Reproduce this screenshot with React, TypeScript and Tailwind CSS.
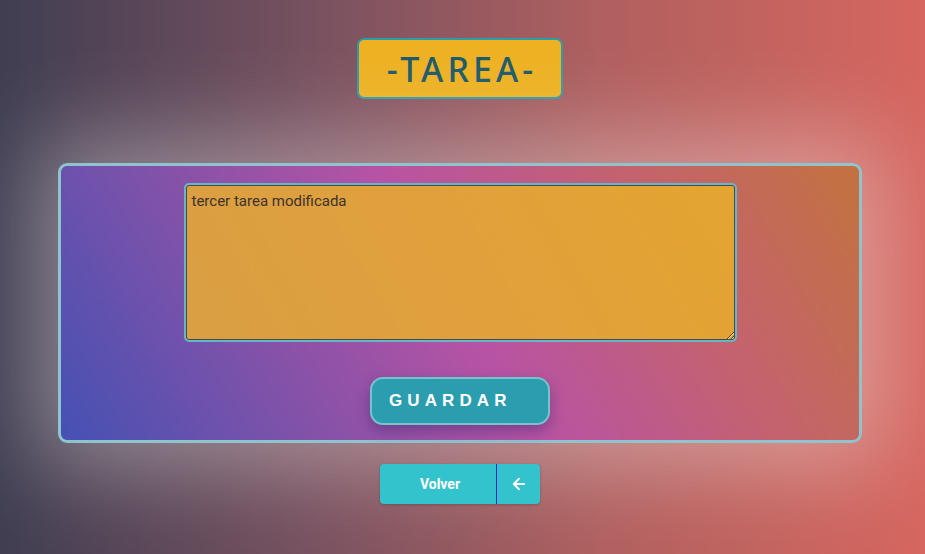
import React from "react";

export default function App() {
  return (
    <div
      className="w-[925px] h-[554px] overflow-hidden bg-[linear-gradient(90deg,#403e52_0%,#7a5260_35%,#b0605f_65%,#d6665f_100%)]"
      style={{ fontFamily: "Roboto, 'Liberation Sans', sans-serif" }}
    >
      <div className="w-[920px] flex flex-col items-center">
        <div className="mt-[38px] w-[206px] h-[61px] rounded-[7px] border-2 border-[#2b9bae] bg-[#edb122] flex items-center justify-center">
          <span
            className="text-[34px] leading-none tracking-[0.12em] pl-[4px] text-[#1e5a6b] font-medium"
            style={{ fontFamily: "'Noto Sans', sans-serif" }}
          >
            -TAREA-
          </span>
        </div>

        <div className="mt-[64px] w-[804px] h-[280px] rounded-[9px] border-[3px] border-[#8fc4cf] shadow-[0_0_90px_25px_rgba(255,255,255,0.35)] bg-[linear-gradient(60deg,#4551b3_0%,#8652a8_28%,#b853a4_50%,#c4626f_75%,#c3723f_100%)] flex flex-col items-center">
          <textarea
            defaultValue="tercer tarea modificada"
            className="mt-[17px] w-[553px] h-[159px] rounded-[5px] border-2 border-[#64b7c6] shadow-[inset_0_0_0_1px_#4a4a4a] bg-[linear-gradient(60deg,#d99f43_0%,#e1a03c_50%,#e4a430_100%)] text-[15px] text-[#3a3330] px-[6px] py-[5px] outline-none"
            style={{ fontFamily: "Roboto, sans-serif" }}
          />
          <button
            className="mt-[35px] w-[180px] h-[48px] rounded-[13px] border-2 border-[#78c2ce] bg-[#2a9daf] shadow-[0_6px_14px_rgba(60,40,110,0.45)] text-white font-bold text-[17px] tracking-[0.3em] text-left pl-[17px]"
            style={{ fontFamily: "'Liberation Sans', Arial, sans-serif" }}
          >
            GUARDAR
          </button>
        </div>

        <div className="mt-[21px] w-[160px] h-[40px] rounded-[4px] bg-[#33c3cd] flex shadow-[0_1px_3px_rgba(0,0,0,0.2)]">
          <div
            className="w-[116px] flex items-center justify-center text-white font-bold text-[14px] pl-[4px]"
            style={{ fontFamily: "Roboto, sans-serif" }}
          >
            Volver
          </div>
          <div className="w-px bg-[#2727d6]" />
          <div className="flex-1 flex items-center justify-center">
            <svg width="18" height="18" viewBox="0 0 24 24" fill="none" stroke="white" strokeWidth="2.4" strokeLinecap="round" strokeLinejoin="round">
              <path d="M19 12H5" />
              <path d="M12 19l-7-7 7-7" />
            </svg>
          </div>
        </div>
      </div>
    </div>
  );
}
